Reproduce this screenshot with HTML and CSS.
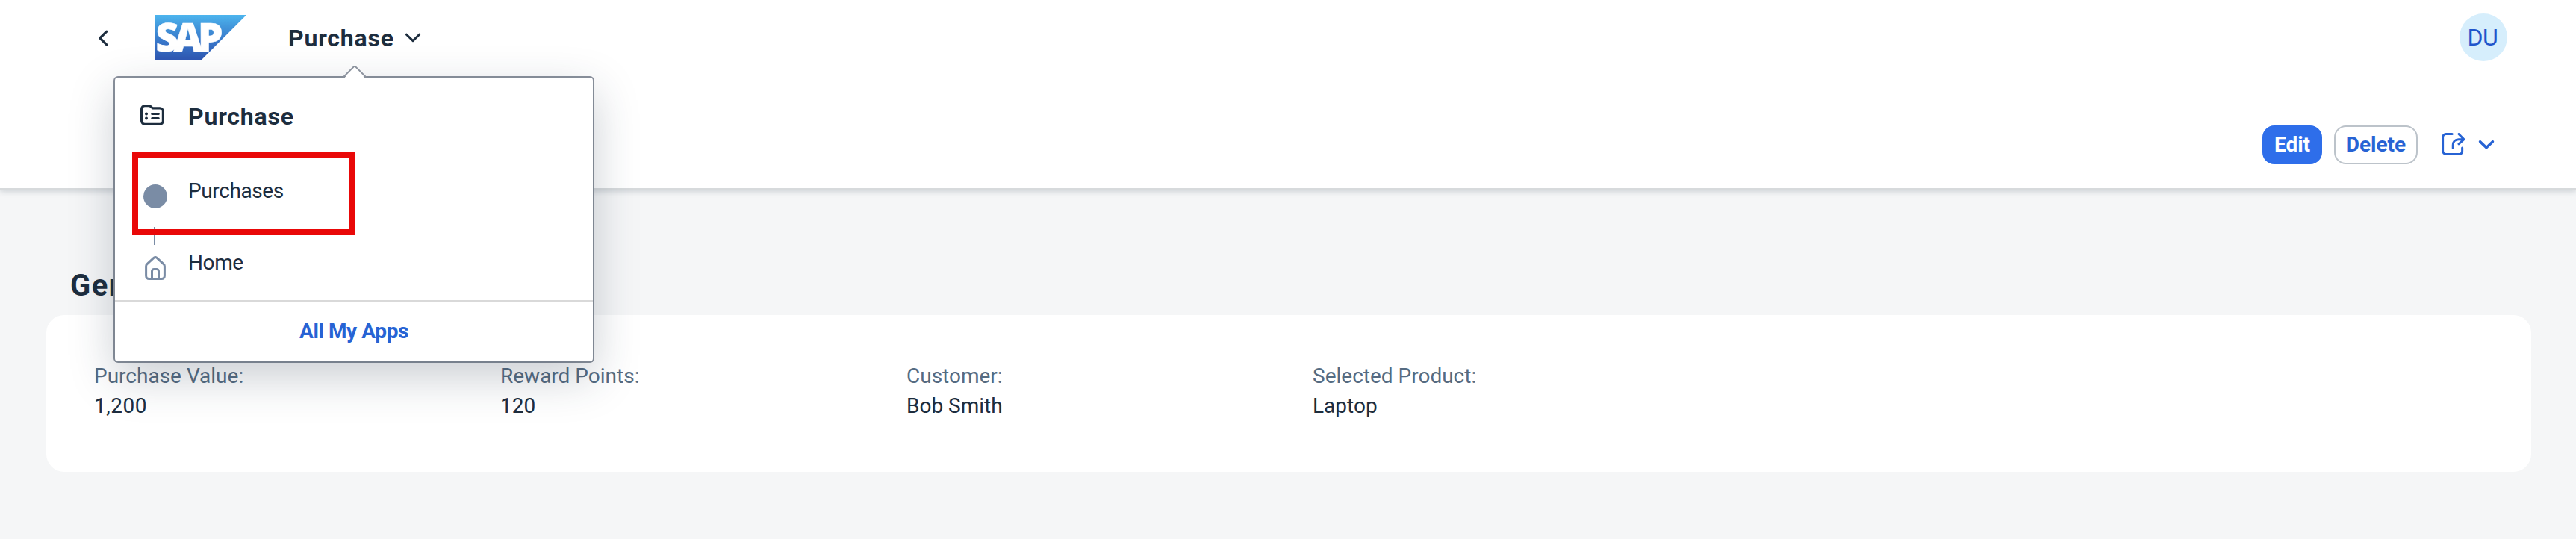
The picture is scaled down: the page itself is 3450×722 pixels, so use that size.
FILE: index.html
```html
<!DOCTYPE html>
<html lang="en">
<head>
<meta charset="utf-8">
<title>Purchase</title>
<link rel="stylesheet" href="styles.css">
</head>
<body>
<header class="header">
  <div class="shellbar">
    <svg class="back" width="14" height="22" viewBox="0 0 14 22" fill="none" stroke="currentColor" stroke-width="3.2" stroke-linecap="round" stroke-linejoin="round"><path d="M11.8 2.2 2.9 11l8.9 8.8"/></svg>
    <svg class="logo" width="122" height="60" viewBox="0 0 122 60">
      <defs><linearGradient id="g" x1="0" y1="0" x2="0" y2="1"><stop offset="0" stop-color="#4db5ee"/><stop offset=".25" stop-color="#4298dc"/><stop offset=".6" stop-color="#3876c9"/><stop offset="1" stop-color="#2f58b3"/></linearGradient></defs>
      <path d="M0 0h122L62 60H0z" fill="url(#g)"/>
      <text class="logo-text" x="0.5 24.500 57" y="48.500">SAP</text>
    </svg>
    <div class="app-title">
      <span>Purchase</span>
      <svg width="22" height="14" viewBox="0 0 22 14" fill="none" stroke="currentColor" stroke-width="3" stroke-linecap="round" stroke-linejoin="round"><path d="m2.4 2.2 8.6 8.4 8.6-8.4"/></svg>
    </div>
    <div class="avatar">DU</div>
  </div>
  <div class="actions">
    <button class="btn btn-primary">Edit</button>
    <button class="btn">Delete</button>
    <div class="share">
      <svg class="share-icon" width="33" height="30" viewBox="0 1 34 31" fill="none" stroke="currentColor" stroke-width="3.1" stroke-linecap="round" stroke-linejoin="round"><path d="M14.6 2.6H6a4.400 4.400 0 0 0-4.400 4.400v19A4.400 4.400 0 0 0 6 30.400h18.500a4 4 0 0 0 4-4v-4.800M15.700 22.200v-4.200c0-5 3-8 7.800-8h7M23.700 2.600l7.300 7.400-7.300 6.300"/></svg>
      <svg width="22" height="14" viewBox="0 0 22 14" fill="none" stroke="currentColor" stroke-width="3.600" stroke-linecap="round" stroke-linejoin="round"><path d="m2.600 2.700 8.400 8 8.400-8"/></svg>
    </div>
  </div>
</header>

<main class="content">
  <h2 class="section-title">General</h2>
  <section class="card">
    <dl class="field"><dt>Purchase Value:</dt><dd class="wide">1,200</dd></dl>
    <dl class="field"><dt>Reward Points:</dt><dd>120</dd></dl>
    <dl class="field"><dt>Customer:</dt><dd>Bob Smith</dd></dl>
    <dl class="field"><dt>Selected Product:</dt><dd>Laptop</dd></dl>
  </section>
</main>

<nav class="popover">
  <svg class="arrow" width="32" height="18" viewBox="0 0 32 18"><path d="M1 18 14.700 2.200q1.300-1.500 2.600 0L31 18z" fill="#fff"/><path d="M.500 15.500 14.700 1.500q1.300-1.300 2.600 0L31.500 15.500" fill="none" stroke="#8b929d" stroke-width="1.800"/></svg>
  <div class="row row-title">
    <span class="icon-cell"><svg width="32" height="28" viewBox="0 0 32 28" fill="none" stroke="currentColor" stroke-width="3.200" stroke-linecap="round" stroke-linejoin="round"><path d="M1.600 22V6a4.400 4.400 0 0 1 4.400-4.400h5.200a4 4 0 0 1 2.600 1l2.600 2.300H26a4.400 4.400 0 0 1 4.400 4.400V22a4.400 4.400 0 0 1-4.400 4.400H6A4.400 4.400 0 0 1 1.600 22z"/><path d="M15.700 12.500h8.600M15.700 18.500h8.600" stroke-width="3"/><path d="M8 12.400h.01M8 18.400h.01" stroke-width="4"/></svg></span>
    <span>Purchase</span>
  </div>
  <a class="row"><span class="icon-cell hist"><i class="dot"></i></span><span>Purchases</span></a>
  <a class="row row-linked"><span class="icon-cell hist"><svg width="28" height="32" viewBox="0 0 28 32" fill="none" stroke="currentColor" stroke-width="3" stroke-linejoin="round"><path d="M1.600 26.500V13.600a4 4 0 0 1 1.400-3L11.600 2.600a3.600 3.600 0 0 1 4.800 0L25 10.600a4 4 0 0 1 1.400 3v12.900a4 4 0 0 1-4 4H5.600a4 4 0 0 1-4-4zM9.500 30.500V20.200a2.600 2.600 0 0 1 2.600-2.600h3.800a2.600 2.600 0 0 1 2.600 2.600v10.300"/></svg></span><span>Home</span></a>
  <div class="popover-footer"><span>All My Apps</span></div>
  <div class="highlight"></div>
</nav>
</body>
</html>
```
FILE: styles.css
```css
* { box-sizing: border-box; }

body {
  margin: 0;
  height: 722px;
  overflow: hidden;
  background: #f5f6f7;
  color: #1d2d3e;
  font: 400 28px/40px Roboto, "Liberation Sans", sans-serif;
}

.header {
  height: 254px;
  background: #fff;
  border-bottom: 2px solid #d7dadc;
  box-shadow: 0 2px 8px rgba(34, 53, 72, .22);
}

.shellbar {
  display: flex;
  align-items: center;
  height: 100px;
  padding: 0 92px 0 131px;
}
.back { margin-top: 2px; }
.logo {
  margin-left: 63px;
  overflow: visible;
}
.logo-text {
  font: 800 53px "Open Sans", sans-serif;
  fill: #fff;
  stroke: #fff;
  stroke-width: .6px;
}
.app-title {
  display: flex;
  align-items: center;
  gap: 14px;
  margin-left: 56px;
  font-size: 32px;
  font-weight: 700;
  letter-spacing: .8px;
}
.app-title span { padding-top: 1px; }
.app-title svg { margin-top: 2px; }
.avatar {
  width: 64px;
  height: 64px;
  margin-left: auto;
  padding-right: 2px;
  border-radius: 50%;
  background: #d6eefc;
  color: #1f55cb;
  font-size: 32px;
  line-height: 64px;
  letter-spacing: -.4px;
  text-align: center;
}

.actions {
  display: flex;
  align-items: center;
  justify-content: flex-end;
  gap: 16px;
  margin-top: 68px;
  padding-right: 109px;
}
.btn {
  width: 112px;
  height: 52px;
  padding: 0;
  border: 2px solid #bcc3ca;
  border-radius: 16px;
  background: #fff;
  color: #2763d4;
  font: 700 28px/44px Roboto, sans-serif;
}
.btn-primary {
  width: 80px;
  border-color: #2e6eea;
  background: #2e6eea;
  color: #fff;
}
.share {
  display: flex;
  align-items: center;
  gap: 16px;
  margin-left: 16px;
  color: #2763d4;
}
.share-icon { margin-top: -2px; }

.content { padding: 109px 60px 0 63px; }
.section-title {
  margin: 0 0 19px 31px;
  font-size: 40px;
  line-height: 40px;
  letter-spacing: 1.5px;
}
.card {
  display: grid;
  grid-template-columns: repeat(6, 544px);
  height: 210px;
  margin-left: -1px;
  padding: 62px 0 0 64px;
  border-radius: 24px;
  background: #fff;
  overflow: hidden;
}
.field { margin: 0; }
.field dt { color: #556b82; }
.field dd { margin: 0; }
.field .wide { letter-spacing: .5px; }

/* Navigation menu floating over the page */
.popover {
  position: absolute;
  left: 154px;
  top: 104px;
  width: 640px;
  height: 380px;
  border-radius: 4px;
  background: #fff;
  box-shadow: 0 20px 60px rgba(34, 53, 72, .25), 0 0 0 2px #8b929d;
}
.arrow {
  position: absolute;
  left: 305px;
  top: -16px;
}
.row {
  position: relative;
  display: flex;
  align-items: center;
  height: 96px;
  padding-left: 34px;
  letter-spacing: -.4px;
}
.row-title {
  height: 104px;
  font-size: 32px;
  font-weight: 700;
  letter-spacing: .8px;
}
.icon-cell {
  display: flex;
  flex: none;
  width: 64px;
  margin-top: -4px;
}
.hist {
  justify-content: center;
  width: 40px;
  margin: 14px 24px 0 0;
  color: #7a8ca5;
}
.dot {
  width: 32px;
  height: 32px;
  border-radius: 50%;
  background: #7a8ca5;
}
.row-linked::before {
  content: "";
  position: absolute;
  left: 52px;
  top: 0;
  width: 2px;
  height: 24px;
  background: #7a8ca5;
}
.popover-footer {
  display: flex;
  align-items: center;
  justify-content: center;
  height: 82px;
  margin-top: 2px;
  border-top: 2px solid #d9d9d9;
  color: #2763d4;
  font-weight: 700;
  letter-spacing: -.4px;
}
.highlight {
  position: absolute;
  left: 23px;
  top: 99px;
  width: 298px;
  height: 112px;
  border: 8px solid #e90808;
}
```
